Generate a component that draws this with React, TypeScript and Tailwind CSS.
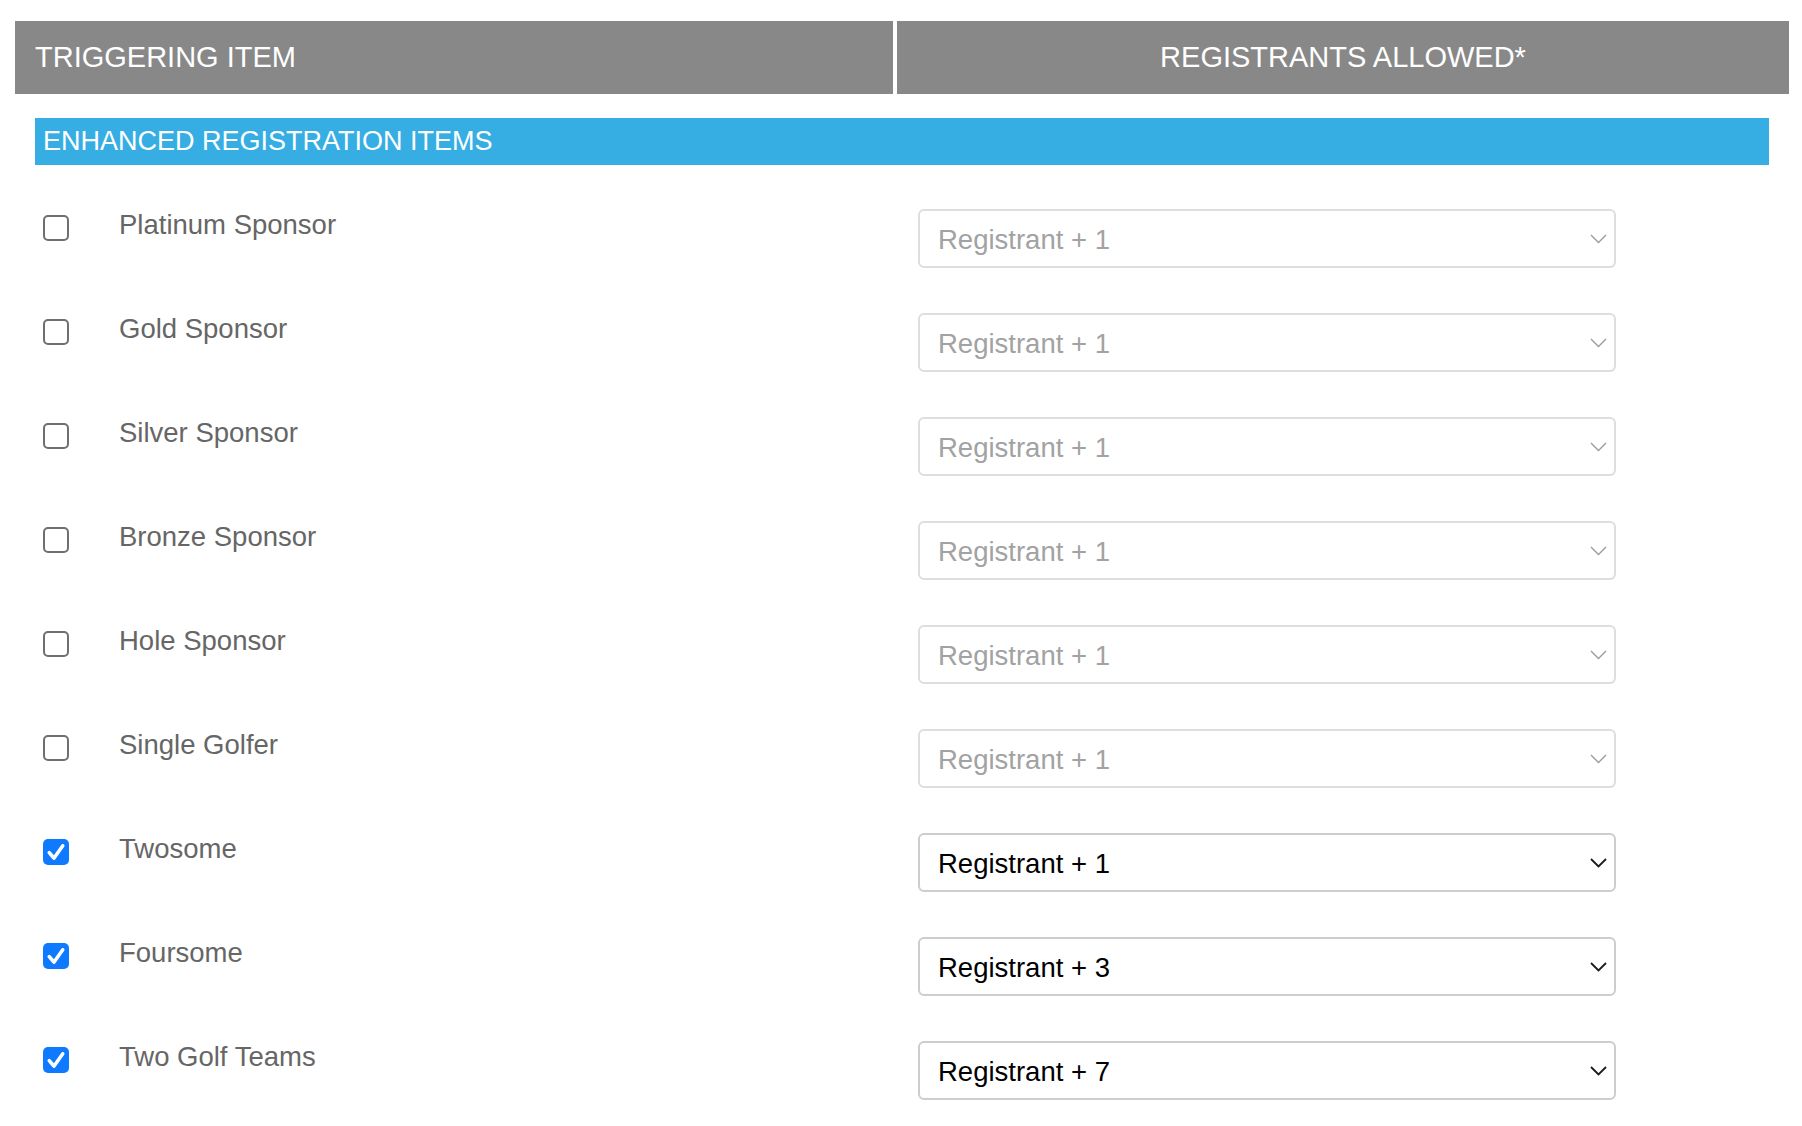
import React from "react";

type Row = { label: string; checked: boolean; value: string };

const rows: Row[] = [
  { label: "Platinum Sponsor", checked: false, value: "Registrant + 1" },
  { label: "Gold Sponsor", checked: false, value: "Registrant + 1" },
  { label: "Silver Sponsor", checked: false, value: "Registrant + 1" },
  { label: "Bronze Sponsor", checked: false, value: "Registrant + 1" },
  { label: "Hole Sponsor", checked: false, value: "Registrant + 1" },
  { label: "Single Golfer", checked: false, value: "Registrant + 1" },
  { label: "Twosome", checked: true, value: "Registrant + 1" },
  { label: "Foursome", checked: true, value: "Registrant + 3" },
  { label: "Two Golf Teams", checked: true, value: "Registrant + 7" },
];

function Checkbox({ checked }: { checked: boolean }) {
  if (checked) {
    return (
      <div className="mt-[6px] ml-[8px] flex h-[26px] w-[26px] shrink-0 items-center justify-center rounded-[5px] bg-[#0d7aff]">
        <svg width="26" height="26" viewBox="0 0 25 25" fill="none">
          <path
            d="M6 13 L10.5 18.5 L19 6.5"
            stroke="white"
            strokeWidth="3.4"
            strokeLinecap="round"
            strokeLinejoin="round"
          />
        </svg>
      </div>
    );
  }
  return (
    <div className="mt-[6px] ml-[8px] h-[26px] w-[26px] shrink-0 rounded-[5px] border-2 border-[#6f6f6f] bg-white" />
  );
}

function SelectBox({ value, enabled }: { value: string; enabled: boolean }) {
  return (
    <div
      className={
        enabled
          ? "flex h-[59px] w-[698px] shrink-0 items-center justify-between rounded-[6px] border-2 border-[#cdcdcd] bg-white pl-[18px] pr-[7px] text-[27.5px] text-black"
          : "flex h-[59px] w-[698px] shrink-0 items-center justify-between rounded-[6px] border-2 border-[#dedede] bg-white pl-[18px] pr-[7px] text-[27.5px] text-[#a2a2a2]"
      }
    >
      <span className="pt-[2px] leading-[32px]">{value}</span>
      <svg width="17" height="10" viewBox="0 0 17 10" fill="none">
        <path
          d="M1 1 L8.5 8.5 L16 1"
          stroke={enabled ? "#1a1a1a" : "#9c9c9c"}
          strokeWidth={enabled ? "1.8" : "1.4"}
        />
      </svg>
    </div>
  );
}

export default function App() {
  return (
    <div
      className="min-h-[1126px] w-full bg-white pt-[21px] pl-[15px] pr-[13px]"
      style={{ fontFamily: '"Liberation Sans", Arial, sans-serif' }}
    >
      <div className="flex gap-[4px]">
        <div className="flex h-[73px] w-[878px] items-center bg-[#888888] pl-[20px] text-[29px] text-white">
          TRIGGERING ITEM
        </div>
        <div className="flex h-[73px] flex-1 items-center justify-center bg-[#888888] text-[29px] text-white">
          REGISTRANTS ALLOWED*
        </div>
      </div>

      <div className="mx-[20px] mt-[24px]">
        <div className="flex h-[47px] items-center bg-[#36aee4] pl-[8px] text-[27px] text-white">
          ENHANCED REGISTRATION ITEMS
        </div>

        <div className="mt-[44px] flex flex-col gap-[45px]">
          {rows.map((r) => (
            <div key={r.label} className="flex items-start">
              <div className="flex w-[883px] shrink-0 items-start">
                <Checkbox checked={r.checked} />
                <div className="ml-[50px] text-[27.5px] leading-[32px] text-[#666666]">
                  {r.label}
                </div>
              </div>
              <SelectBox value={r.value} enabled={r.checked} />
            </div>
          ))}
        </div>
      </div>
    </div>
  );
}
